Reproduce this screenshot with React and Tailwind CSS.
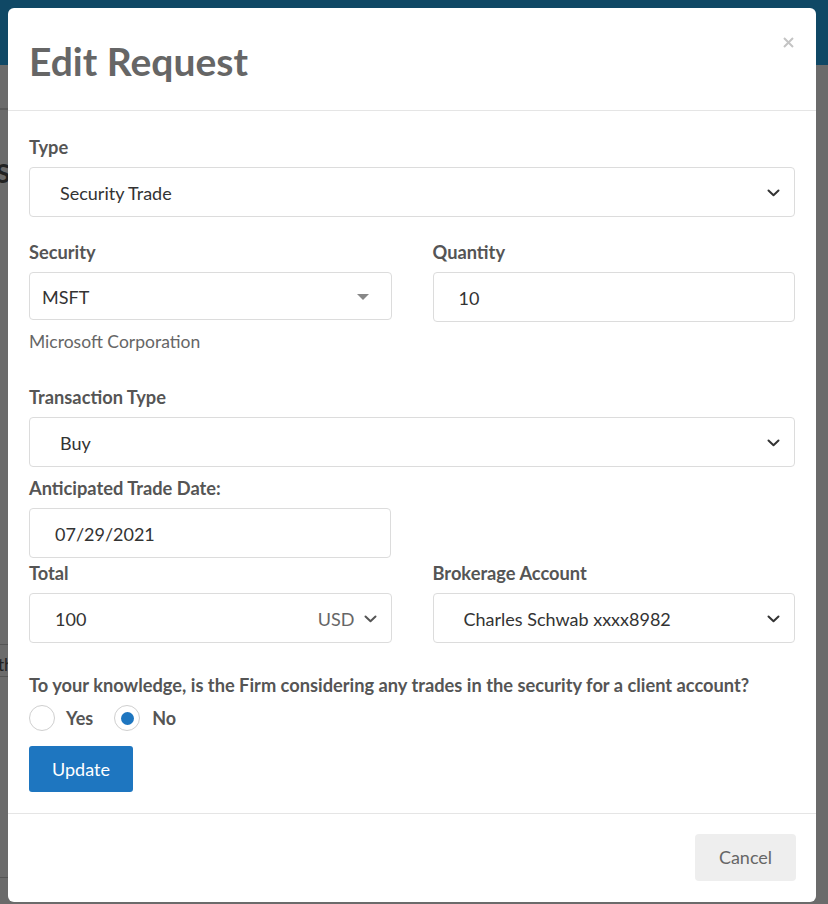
import React from "react";

const font = { fontFamily: "Lato, 'Noto Sans', sans-serif" };

function Chevron({ className = "" }) {
  return (
    <svg width="13" height="8" viewBox="0 0 13 8" className={className}>
      <path d="M1.5 1.5 L6.5 6.2 L11.5 1.5" fill="none" stroke="currentColor" strokeWidth="2" strokeLinecap="round" strokeLinejoin="round" />
    </svg>
  );
}

function Label({ children, className = "" }) {
  return <div className={"h-6 leading-6 text-[18.25px] font-bold text-[#555] whitespace-nowrap " + className}>{children}</div>;
}

function SelectBox({ text, h = "h-[50px]", pl = "pl-[30px]" }) {
  return (
    <div className={`${h} ${pl} pr-[14px] pt-[2px] flex items-center justify-between rounded-[4px] border border-[#dcdcdc] bg-white text-[18px] text-[#333]`}>
      <span>{text}</span>
      <Chevron className="text-[#333]" />
    </div>
  );
}

export default function App() {
  return (
    <div className="relative w-[828px] h-[904px] overflow-hidden bg-[#6b6b6b]" style={font}>
      {/* page behind overlay */}
      <div className="h-[65px] bg-[#0f4865]" />
      <div className="absolute left-0 top-[108px] w-[8px] h-[2px] bg-[#5a5a5a]" />
      <div className="absolute -left-[4px] top-[160px] text-[26px] font-bold text-[#222] leading-none">Se</div>
      <div className="absolute left-0 top-[644px] w-[8px] h-[1px] bg-[#555]" />
      <div className="absolute -left-[2px] top-[656px] text-[17px] text-[#222] leading-none">the</div>
      <div className="absolute left-0 top-[676px] w-[8px] h-[1px] bg-[#555]" />
      <div className="absolute left-0 top-[877px] w-[8px] h-[1px] bg-[#555]" />

      {/* modal */}
      <div className="absolute left-[8px] top-[8px] w-[808px] h-[894px] bg-white rounded-[6px] flex flex-col">
        <div className="relative h-[103px] border-b border-[#e5e5e5] flex items-center pl-[21px]">
          <h1 className="text-[39px] font-bold text-[#666] leading-none pt-1">Edit Request</h1>
          <button className="absolute right-[22px] top-[29px] text-[#c4c4c4]">
            <svg width="11" height="11" viewBox="0 0 11 11">
              <path d="M1 1 L10 10 M10 1 L1 10" stroke="currentColor" strokeWidth="2" />
            </svg>
          </button>
        </div>

        <div className="flex-1 px-[21px] pt-[24px] border-b border-[#e5e5e5]">
          <Label className="mb-2">Type</Label>
          <SelectBox text="Security Trade" />

          <div className="mt-[23px] grid grid-cols-2 gap-x-[41px]">
            <div>
              <Label className="mb-2">Security</Label>
              <div className="h-[48px] pl-[12px] pr-[22px] pt-[2px] flex items-center justify-between rounded-[4px] border border-[#dcdcdc] text-[18px] text-[#333]">
                <span>MSFT</span>
                <svg width="12" height="6" viewBox="0 0 12 6"><path d="M0 0 L12 0 L6 6 Z" fill="#888" /></svg>
              </div>
              <div className="mt-[10px] h-6 leading-6 text-[17.5px] text-[#666]">Microsoft Corporation</div>
            </div>
            <div>
              <Label className="mb-2">Quantity</Label>
              <div className="h-[50px] pl-[25px] pt-[2px] flex items-center rounded-[4px] border border-[#dcdcdc] text-[18px] text-[#333]">10</div>
            </div>
          </div>

          <Label className="mt-[31px] mb-2">Transaction Type</Label>
          <SelectBox text="Buy" />

          <Label className="mt-[9px] mb-2">Anticipated Trade Date:</Label>
          <div className="w-[362px] h-[50px] pl-[25px] pt-[2px] flex items-center rounded-[4px] border border-[#dcdcdc] text-[18px] text-[#333]">07/29/2021</div>

          <div className="mt-[3px] grid grid-cols-2 gap-x-[41px]">
            <div>
              <Label className="mb-2">Total</Label>
              <div className="h-[50px] pl-[25px] pr-[14px] pt-[2px] flex items-center justify-between rounded-[4px] border border-[#dcdcdc] text-[18px]">
                <span className="text-[#333]">100</span>
                <span className="flex items-center gap-[9px] text-[#666]">USD<Chevron className="text-[#555]" /></span>
              </div>
            </div>
            <div>
              <Label className="mb-2">Brokerage Account</Label>
              <SelectBox text="Charles Schwab xxxx8982" />
            </div>
          </div>

          <Label className="mt-[30px]">To your knowledge, is the Firm considering any trades in the security for a client account?</Label>
          <div className="mt-2 flex items-center h-[26px]">
            <span className="w-[26px] h-[26px] rounded-full border border-[#cfcfcf]" />
            <span className="ml-[11px] text-[18px] font-bold text-[#555]">Yes</span>
            <span className="ml-[21px] w-[26px] h-[26px] rounded-full border border-[#cfcfcf] flex items-center justify-center">
              <span className="w-[13px] h-[13px] rounded-full bg-[#1e76c0]" />
            </span>
            <span className="ml-[12px] text-[18px] font-bold text-[#555]">No</span>
          </div>
          <button className="mt-[15px] w-[104px] h-[46px] rounded-[3px] bg-[#1e76c0] text-white text-[18px]">Update</button>
        </div>

        <div className="h-[88px] flex justify-end items-start pt-[20px] pr-[20px]">
          <button className="w-[101px] h-[47px] rounded-[4px] bg-[#eeeeee] text-[#666] text-[18px]">Cancel</button>
        </div>
      </div>
    </div>
  );
}
